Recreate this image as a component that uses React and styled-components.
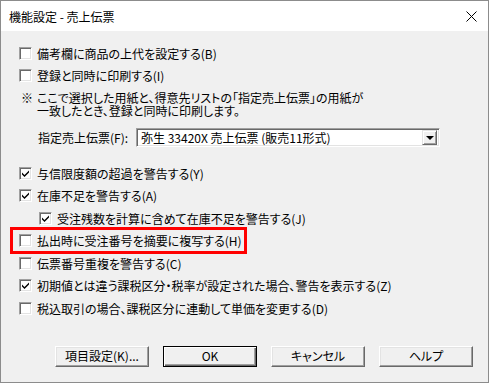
import styled, { createGlobalStyle } from "styled-components";

const GlobalStyle = createGlobalStyle`
  html, body {
    margin: 0;
    padding: 0;
    background: #ffffff;
  }
  body {
    font-family: "Noto Sans CJK JP", "Liberation Sans", sans-serif;
    font-size: 12px;
    color: #000000;
    font-feature-settings: "palt";
  }
`;

const Window = styled.div`
  box-sizing: border-box;
  width: 489px;
  height: 383px;
  border: 1px solid #8c8c8c;
  display: flex;
  flex-direction: column;
  background: #f0f0f0;
`;

const TitleBar = styled.div`
  height: 30px;
  background: #ffffff;
  display: flex;
  align-items: center;
  justify-content: space-between;
  padding: 0 10px 0 8px;
  flex-shrink: 0;
`;

const Title = styled.span`
  font-size: 12px;
  line-height: 1;
  margin-top: 1px;
`;

const CloseIcon = styled.svg`
  width: 11px;
  height: 11px;
  margin-right: 1px;
`;

const Body = styled.div`
  flex: 1;
  display: flex;
  flex-direction: column;
  padding: 11px 0 0 18px;
`;

const Row = styled.label`
  position: relative;
  height: 22.5px;
  display: flex;
  align-items: center;
  gap: 5px;
  margin-left: ${(p) => (p.$indent ? 20 : 0)}px;
  white-space: nowrap;

  ${(p) =>
    p.$highlight &&
    `
    &::after {
      content: "";
      position: absolute;
      left: -9px;
      top: -2.5px;
      width: 237px;
      height: 27px;
      box-sizing: border-box;
      border: 3px solid #ff0000;
      pointer-events: none;
    }
  `}
`;

const Box = styled.span`
  box-sizing: border-box;
  width: 13px;
  height: 13px;
  flex-shrink: 0;
  background: #ffffff;
  border-style: solid;
  border-width: 1px;
  border-color: #a0a0a0 #ffffff #ffffff #a0a0a0;
  box-shadow: inset 1px 1px 0 #696969, inset -1px -1px 0 #e3e3e3;
  display: flex;
  align-items: center;
  justify-content: center;
`;

const Note = styled.div`
  margin-top: 4px;
  margin-left: 2px;
  line-height: 13px;
  display: flex;
  gap: 4px;
`;

const NoteLines = styled.div`
  display: flex;
  flex-direction: column;
`;

const ComboRow = styled.div`
  margin-top: 11px;
  margin-left: 19px;
  display: flex;
  align-items: center;
  height: 19px;
`;

const ComboLabel = styled.span`
  width: 98px;
  flex-shrink: 0;
`;

const Combo = styled.div`
  box-sizing: border-box;
  width: 304px;
  height: 19px;
  background: #ffffff;
  border-style: solid;
  border-width: 1px;
  border-color: #a0a0a0 #ffffff #ffffff #a0a0a0;
  box-shadow: inset 1px 1px 0 #696969, inset -1px -1px 0 #e3e3e3;
  display: flex;
  align-items: center;
  padding: 0 2px 0 4px;
`;

const ComboText = styled.span`
  flex: 1;
  line-height: 1;
`;

const ComboButton = styled.span`
  box-sizing: border-box;
  width: 15px;
  height: 15px;
  background: #f0f0f0;
  border-style: solid;
  border-width: 1px;
  border-color: #e3e3e3 #696969 #696969 #e3e3e3;
  box-shadow: inset 1px 1px 0 #ffffff, inset -1px -1px 0 #a0a0a0;
  display: flex;
  align-items: center;
  justify-content: center;
`;

const Arrow = styled.span`
  width: 0;
  height: 0;
  border-left: 4px solid transparent;
  border-right: 4px solid transparent;
  border-top: 4px solid #000000;
`;

const Group = styled.div`
  margin-top: 15px;
  display: flex;
  flex-direction: column;
`;

const Buttons = styled.div`
  margin-top: 26px;
  margin-left: 36px;
  display: flex;
  gap: 14px;
`;

const Button = styled.button`
  box-sizing: border-box;
  width: 94px;
  height: 21px;
  padding: 0;
  font: inherit;
  font-size: 12px;
  color: #000000;
  background: #f0f0f0;
  border-style: solid;
  border-width: 1px;
  border-color: ${(p) =>
    p.$default ? "#000000" : "#ffffff #696969 #696969 #ffffff"};
  box-shadow: ${(p) =>
    p.$default
      ? "inset 1px 1px 0 #ffffff, inset -1px -1px 0 #696969, inset -2px -2px 0 #a0a0a0"
      : "inset -1px -1px 0 #a0a0a0, inset 1px 1px 0 #e3e3e3"};
  line-height: 1;
`;

function Check() {
  return (
    <svg width="9" height="9" viewBox="0 0 9 9">
      <path d="M1 3.5 L3.5 6 L8 1.5 V3.5 L3.5 8 L1 5.5 Z" fill="#000" />
    </svg>
  );
}

function CheckRow({ checked, indent, highlight, children }) {
  return (
    <Row $indent={indent} $highlight={highlight}>
      <Box>{checked && <Check />}</Box>
      <span>{children}</span>
    </Row>
  );
}

export default function App() {
  return (
    <>
      <GlobalStyle />
      <Window>
        <TitleBar>
          <Title>機能設定 - 売上伝票</Title>
          <CloseIcon viewBox="0 0 11 11">
            <path d="M0.5 0.5 L10.5 10.5 M10.5 0.5 L0.5 10.5" stroke="#000" strokeWidth="1" />
          </CloseIcon>
        </TitleBar>
        <Body>
          <CheckRow>備考欄に商品の上代を設定する(B)</CheckRow>
          <CheckRow>登録と同時に印刷する(I)</CheckRow>
          <Note>
            <span>※</span>
            <NoteLines>
              <span>ここで選択した用紙と、得意先リストの「指定売上伝票」の用紙が</span>
              <span>一致したとき、登録と同時に印刷します。</span>
            </NoteLines>
          </Note>
          <ComboRow>
            <ComboLabel>指定売上伝票(F):</ComboLabel>
            <Combo>
              <ComboText>弥生 33420X 売上伝票 (販売11形式)</ComboText>
              <ComboButton>
                <Arrow />
              </ComboButton>
            </Combo>
          </ComboRow>
          <Group>
            <CheckRow checked>与信限度額の超過を警告する(Y)</CheckRow>
            <CheckRow checked>在庫不足を警告する(A)</CheckRow>
            <CheckRow checked indent>
              受注残数を計算に含めて在庫不足を警告する(J)
            </CheckRow>
            <CheckRow highlight>払出時に受注番号を摘要に複写する(H)</CheckRow>
            <CheckRow>伝票番号重複を警告する(C)</CheckRow>
            <CheckRow checked>
              初期値とは違う課税区分・税率が設定された場合、警告を表示する(Z)
            </CheckRow>
            <CheckRow>税込取引の場合、課税区分に連動して単価を変更する(D)</CheckRow>
          </Group>
          <Buttons>
            <Button>項目設定(K)...</Button>
            <Button $default>OK</Button>
            <Button>キャンセル</Button>
            <Button>ヘルプ</Button>
          </Buttons>
        </Body>
      </Window>
    </>
  );
}
